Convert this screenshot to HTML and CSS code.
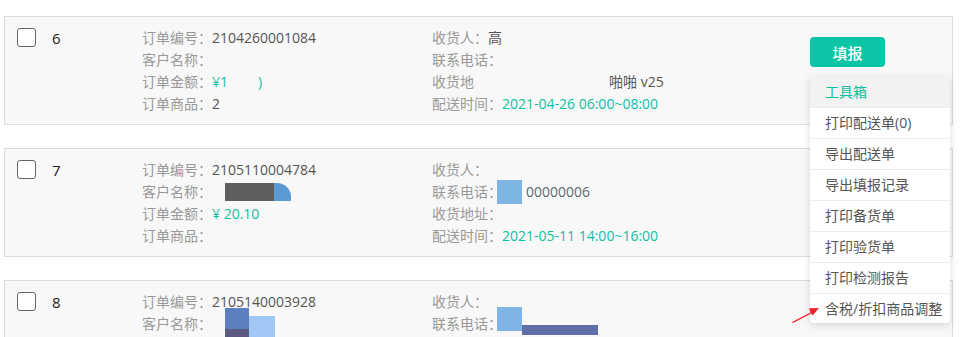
FILE: index.html
```html
<!DOCTYPE html>
<html lang="zh">
<head>
<meta charset="utf-8">
<link rel="stylesheet" href="styles.css">
</head>
<body>
<div class="list">
  <div class="card">
    <div class="check-col"><span class="checkbox"></span></div>
    <div class="num">6</div>
    <div class="col1">
      <div class="row"><span class="lbl">订单编号：</span><span class="val">2104260001084</span></div>
      <div class="row"><span class="lbl">客户名称：</span></div>
      <div class="row"><span class="lbl">订单金额：</span><span class="green">¥1<span class="gap g1"></span>)</span></div>
      <div class="row"><span class="lbl">订单商品：</span><span class="val">2</span></div>
    </div>
    <div class="col2">
      <div class="row"><span class="lbl">收货人：</span><span class="val">高</span></div>
      <div class="row"><span class="lbl">联系电话：</span></div>
      <div class="row"><span class="lbl">收货地</span><span class="gap g2"></span><span class="val">啪啪 v25</span></div>
      <div class="row"><span class="lbl">配送时间：</span><span class="green">2021-04-26 06:00~08:00</span></div>
    </div>
    <div class="act">
      <button class="btn">填报</button>
      <div class="menu">
        <div class="menu-head">工具箱</div>
        <div class="menu-item">打印配送单(0)</div>
        <div class="menu-item">导出配送单</div>
        <div class="menu-item">导出填报记录</div>
        <div class="menu-item">打印备货单</div>
        <div class="menu-item">打印验货单</div>
        <div class="menu-item">打印检测报告</div>
        <div class="menu-item last">含税/折扣商品调整</div>
      </div>
    </div>
  </div>

  <div class="card">
    <div class="check-col"><span class="checkbox"></span></div>
    <div class="num">7</div>
    <div class="col1">
      <div class="row"><span class="lbl">订单编号：</span><span class="val">2105110004784</span></div>
      <div class="row"><span class="lbl">客户名称：</span><span class="mask m-name"><span class="mk-dark"></span><span class="mk-blue"></span></span></div>
      <div class="row"><span class="lbl">订单金额：</span><span class="green">¥ 20.10</span></div>
      <div class="row"><span class="lbl">订单商品：</span></div>
    </div>
    <div class="col2">
      <div class="row"><span class="lbl">收货人：</span></div>
      <div class="row"><span class="lbl">联系电话：</span><span class="mask m-phone"></span><span class="faint">00000006</span></div>
      <div class="row"><span class="lbl">收货地址：</span></div>
      <div class="row"><span class="lbl">配送时间：</span><span class="green">2021-05-11 14:00~16:00</span></div>
    </div>
    <div class="act"></div>
  </div>

  <div class="card">
    <div class="check-col"><span class="checkbox"></span></div>
    <div class="num">8</div>
    <div class="col1">
      <div class="row"><span class="lbl">订单编号：</span><span class="val">2105140003928</span></div>
      <div class="row"><span class="lbl">客户名称：</span><span class="mask m-name3"><span class="mk-a"></span><span class="mk-b"></span></span></div>
      <div class="row"><span class="lbl">订单金额：</span></div>
      <div class="row"><span class="lbl">订单商品：</span></div>
    </div>
    <div class="col2">
      <div class="row"><span class="lbl">收货人：</span></div>
      <div class="row"><span class="lbl">联系电话：</span><span class="mask m-phone3"></span><span class="mask m-strip"></span></div>
      <div class="row"><span class="lbl">收货地址：</span></div>
      <div class="row"><span class="lbl">配送时间：</span></div>
    </div>
    <div class="act"></div>
  </div>
</div>
<svg class="arrow" width="30" height="20" viewBox="0 0 30 20">
  <polygon points="1,18 19.5,8.6 18.1,4.2 28,4 21.5,11.4 20.3,9.6 2,19" fill="#f5222d"/>
</svg>
</body>
</html>
```
FILE: styles.css
```css
* { box-sizing: border-box; }
html, body {
  margin: 0;
  padding: 0;
  background: #fff;
  font-family: "Open Sans", "Noto Sans CJK SC", sans-serif;
  font-size: 14px;
  color: #555;
}
.list {
  padding: 16px 0 0 4px;
  width: 953px;
  display: flex;
  flex-direction: column;
  gap: 23px;
}
.card {
  height: 109px;
  background: #f8f8f8;
  border: 1px solid #dcdcdc;
  display: flex;
  padding: 10px 0 0 12px;
}
.check-col { width: 35px; padding-top: 1px; }
.checkbox {
  display: block;
  width: 19px;
  height: 19px;
  border: 1px solid #666;
  border-radius: 3px;
  background: #fff;
}
.num {
  width: 90px;
  line-height: 22px;
  color: #222;
  font-size: 15px;
}
.col1 { width: 290px; }
.col2 { flex: 1; }
.row {
  height: 22px;
  line-height: 22px;
  white-space: nowrap;
  display: flex;
  align-items: center;
}
.lbl { color: #999; }
.val { color: #555; }
.green { color: #0fc0a0; }
.faint { color: #666; margin-left: 4px; }
.gap { display: inline-block; }
.g1 { width: 30px; }
.g2 { width: 135px; }
.act {
  width: 142px;
  position: relative;
  padding-top: 10px;
}
.btn {
  display: block;
  width: 75px;
  height: 30px;
  border: none;
  border-radius: 4px;
  background: #0cc4a6;
  color: #fff;
  font-family: inherit;
  font-size: 15px;
  font-weight: 500;
  padding: 0;
}
.menu {
  position: absolute;
  left: 0;
  top: 50px;
  width: 140px;
  background: #fff;
  border-radius: 0 0 4px 4px;
  box-shadow: 0 2px 8px rgba(0,0,0,0.15);
  z-index: 5;
}
.menu-head {
  height: 30px;
  line-height: 30px;
  padding-left: 15px;
  background: #f2f2f2;
  color: #0fc0a0;
}
.menu-item {
  height: 31px;
  line-height: 30px;
  padding-left: 15px;
  color: #555;
  border-top: 1px solid #ececec;
}
.menu-item.last { height: 30px; }
.mask { display: inline-flex; height: 100%; }
.m-name { height: 18px; margin-left: 13px; }
.mk-dark { width: 49px; height: 18px; background: #5f5f5f; }
.mk-blue { width: 17px; height: 18px; background: #5b9bd5; border-radius: 0 14px 0 0; }
.m-phone { width: 25px; height: 24px; background: #7fb5e3; margin-left: -5px; }
.m-name3 { height: 22px; margin-left: 13px; align-self: flex-start; margin-top: -5px; }
.mk-a { width: 24px; height: 34px; background: linear-gradient(#5b7fbf 0 21px, #5c5a80 21px); }
.mk-b { width: 26px; height: 26px; margin-top: 8px; background: #a0c8f5; }
.m-phone3 { width: 25px; height: 24px; background: #80b4e4; margin-left: -5px; align-self: flex-start; margin-top: -6px; }
.m-strip { width: 76px; height: 10px; background: #5f6fa8; align-self: flex-end; }
.arrow {
  position: absolute;
  left: 791px;
  top: 304px;
  z-index: 6;
}
```
